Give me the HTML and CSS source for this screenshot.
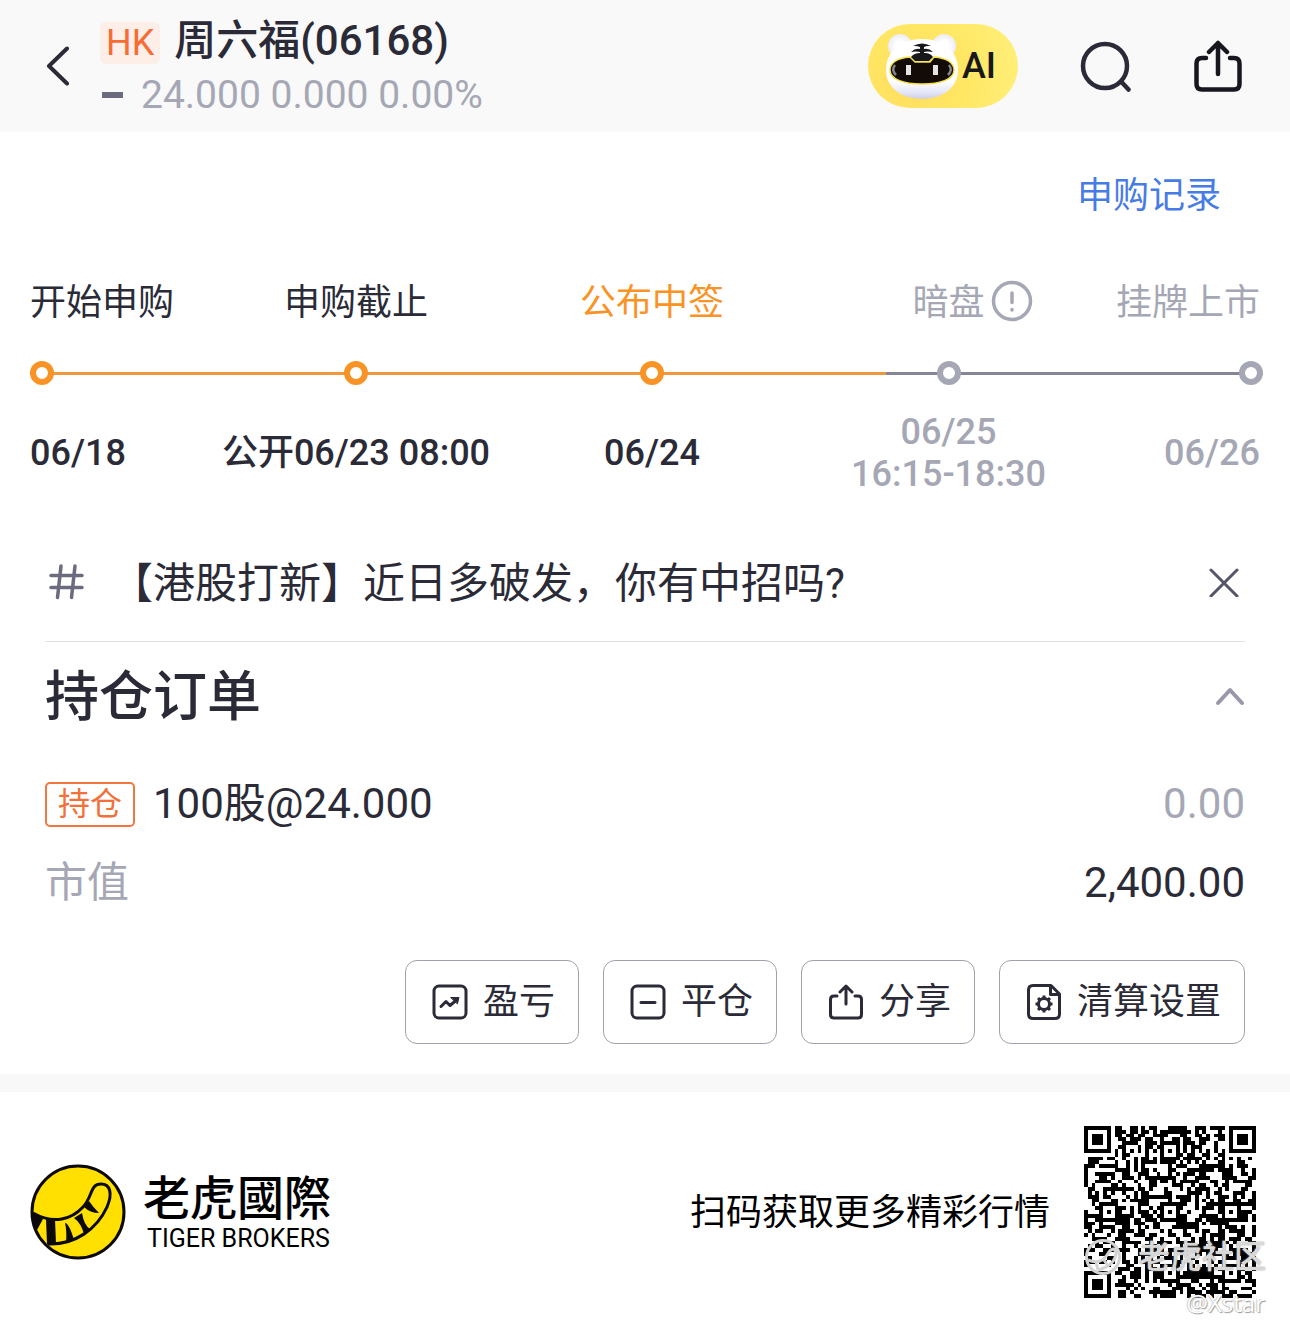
FILE: index.html
```html
<!DOCTYPE html>
<html lang="zh-CN">
<head>
<meta charset="utf-8">
<meta name="viewport" content="width=device-width, initial-scale=1">
<title>周六福(06168)</title>
<link rel="stylesheet" href="styles.css">
</head>
<body>
<header class="topbar">
  <button class="icon-button back" type="button" aria-label="返回">
    <svg width="24" height="40" viewBox="0 0 24 40" fill="none" stroke="#2b2b38" stroke-width="4" stroke-linecap="round" stroke-linejoin="round"><path d="M21 2.500L3 20l18 17.500"/></svg>
  </button>
  <div class="stock">
    <div class="stock-name"><span class="market">HK</span><h1>周六福(06168)</h1></div>
    <div class="stock-quote"><span class="flat"></span><span>24.000 0.000 0.00%</span></div>
  </div>
  <nav class="tools">
    <button class="ai" type="button">
      <svg width="76" height="72" viewBox="0 0 76 72">
        <defs>
          <linearGradient id="head" x1="0" y1="0" x2="0" y2="1"><stop offset="0.7" stop-color="#fff"/><stop offset="0.88" stop-color="#e6e8fa"/><stop offset="1" stop-color="#cfcfe2"/></linearGradient>
          <radialGradient id="ear"><stop offset="0.4" stop-color="#fff"/><stop offset="1" stop-color="#ececf4"/></radialGradient>
        </defs>
        <circle cx="16" cy="16" r="12" fill="url(#ear)"/><circle cx="60" cy="16" r="12" fill="url(#ear)"/>
        <path d="M38 9C58 9 74 20 74 40 74 58 58 69 38 69S2 58 2 40C2 20 18 9 38 9z" fill="url(#head)"/>
        <path d="M26 27C13 28 6 33 6 40c0 9 13 14 32 14s32-5 32-14c0-7-7-12-20-13l-4 5H31z" fill="#120b08" stroke="#f5df3c" stroke-width="1.500"/>
        <path d="M29 16q9-5 18 0q-5-.5-7 1v2q5-1 9 3q-6-1-9 0v1q6-.5 9 4l-4 4H31l-4-4q3-4 9-4v-1q-4-1-9 0q4-4 9-3v-2q-3-1.500-7-1z" fill="#17171c"/>
        <path d="M11 35q-4 5 1 10M65 35q4 5-1 10" fill="none" stroke="#85858c" stroke-width="2.500"/>
        <path d="M22 35h5v10h-5zM49 35h5v10h-5z" fill="#e4e4e4"/>
      </svg><span>AI</span>
    </button>
    <button class="icon-button" type="button" aria-label="搜索">
      <svg width="52" height="52" viewBox="0 0 52 52" fill="none" stroke="#2b2b38" stroke-width="4.500" stroke-linecap="round"><circle cx="25" cy="26" r="22"/><path d="M41.500 42l7 7.500"/></svg>
    </button>
    <button class="icon-button" type="button" aria-label="分享">
      <svg width="48" height="52" viewBox="0 0 48 52" fill="none" stroke="#17171f" stroke-width="4.500" stroke-linecap="round" stroke-linejoin="round"><path d="M12 18H8q-5.500 0-5.500 5.500V44Q2.500 49.500 8 49.500h32q5.500 0 5.500-5.500V23.500Q45.500 18 40 18h-4M24 34V3M15 12L24 3l9 9"/></svg>
    </button>
  </nav>
</header>

<main>
  <section class="ipo">
    <a class="records" href="#records">申购记录</a>
    <ol class="timeline">
      <li class="step"><span class="label">开始申购</span><span class="track"><i class="dot"></i></span><time class="date">06/18</time></li>
      <li class="step"><span class="label">申购截止</span><span class="track"><i class="dot"></i></span><time class="date">公开06/23 08:00</time></li>
      <li class="step current"><span class="label">公布中签</span><span class="track"><i class="dot"></i></span><time class="date">06/24</time></li>
      <li class="step next"><span class="label">暗盘<svg class="info" width="42" height="42" viewBox="0 0 42 42" fill="none" stroke="#a5a8b4" stroke-width="3.500" stroke-linecap="round"><circle cx="21" cy="21" r="18.500"/><path d="M21 13v9.500M21 29.500v.5"/></svg></span><span class="track"><i class="dot"></i></span><time class="date">06/25<br>16:15-18:30</time></li>
      <li class="step future"><span class="label">挂牌上市</span><span class="track"><i class="dot"></i></span><time class="date">06/26</time></li>
    </ol>
  </section>

  <section class="topic">
    <svg width="36" height="36" viewBox="0 0 36 36" fill="none" stroke="#6b6b80" stroke-width="3.500" stroke-linecap="round"><path d="M3 11.500h31M3 23.500h31M13 2L9.500 33.500M27 2L23.500 33.500"/></svg>
    <a class="topic-title" href="#topic">【港股打新】近日多破发，你有中招吗?</a>
    <button class="icon-button" type="button" aria-label="关闭">
      <svg width="30" height="30" viewBox="0 0 30 30" fill="none" stroke="#55556a" stroke-width="3" stroke-linecap="round"><path d="M2 3l26 26M28 3L2 29"/></svg>
    </button>
  </section>

  <section class="holdings">
    <div class="row heading">
      <h2>持仓订单</h2>
      <button class="icon-button" type="button" aria-label="收起">
        <svg width="30" height="20" viewBox="0 0 30 20" fill="none" stroke="#9898aa" stroke-width="4" stroke-linecap="round" stroke-linejoin="round"><path d="M3 17L15 4l12 13"/></svg>
      </button>
    </div>
    <div class="row position"><span class="tag">持仓</span><span>100股@24.000</span><span class="value muted">0.00</span></div>
    <div class="row market-value"><span class="muted">市值</span><span class="value">2,400.00</span></div>
    <div class="actions">
      <button class="action" type="button"><svg width="36" height="36" viewBox="0 0 36 36" fill="none" stroke="#2b2b38" stroke-width="3" stroke-linejoin="round" stroke-linecap="round"><rect x="2" y="2" width="32" height="32" rx="5"/><path d="M9 22.500l5-5 4 4 6-5"/><path d="M19 13.500h8l-1.500 6z" fill="#2b2b38" stroke-width="1"/></svg>盈亏</button>
      <button class="action" type="button"><svg width="36" height="36" viewBox="0 0 36 36" fill="none" stroke="#2b2b38" stroke-width="3" stroke-linecap="round"><rect x="2" y="2" width="32" height="32" rx="5"/><path d="M11 18.500h14"/></svg>平仓</button>
      <button class="action" type="button"><svg width="36" height="36" viewBox="0 0 36 36" fill="none" stroke="#2b2b38" stroke-width="3" stroke-linejoin="round" stroke-linecap="round"><path d="M9 12H6q-3.500 0-3.500 3.500v15Q2.500 34 6 34h24q3.500 0 3.500-3.500v-15Q33.500 12 30 12h-3M18 20V3M12 8l6-6 6 6"/></svg>分享</button>
      <button class="action" type="button"><svg width="36" height="36" viewBox="0 0 36 36" fill="none" stroke="#2b2b38" stroke-width="3" stroke-linejoin="round"><path d="M25 1.500H7Q2.500 1.500 2.500 6v24q0 4.500 4.500 4.500h22q4.500 0 4.500-4.500V10z"/><path d="M24.500 2v8.500H33"/><circle cx="18" cy="20" r="5.500"/><path d="M18 11.500v3M18 25.500v3M9.500 20h3M23.500 20h3M12 14l2 2M22 24l2 2M24 14l-2 2M14 24l-2 2"/></svg>清算设置</button>
    </div>
  </section>
</main>

<footer class="promo">
  <svg class="logo" width="96" height="96" viewBox="0 0 96 96">
    <circle cx="48" cy="48" r="46" fill="#ffe000" stroke="#0b0909" stroke-width="3"/>
    <path d="M3 49C24 61 42 55 53 43 63 32 60 20 71 20 80 20 83 29 77 43 67 65 45 81 18 80" fill="none" stroke="#0b0909" stroke-width="3"/>
    <path d="M2 48l11 7-6 11-4-6zM16 55h9l1 25h-9zM35 59q4 0 9 17l-8 3q1-12-1-20zM44 54l8-5q2 12 8 16l-6 5q-3-11-10-16zM54 43l5-6q4 6 10 12-9 0-15-6z" fill="#0b0909"/>
  </svg>
  <div class="brand"><strong lang="zh-Hant">老虎國際</strong><span>TIGER BROKERS</span></div>
  <p class="scan">扫码获取更多精彩行情</p>
  <div class="qr">
    <svg width="172" height="172" viewBox="0 0 45 45" shape-rendering="crispEdges" role="img" aria-label="二维码"><path id="qr-modules" fill="#000"/></svg>
    <div class="watermark">
      <svg width="38" height="38" viewBox="0 0 38 38" fill="none" stroke="#d3d3d3" stroke-width="3"><circle cx="19" cy="19" r="16.500"/><path d="M4 22q13 5 19-5t9-3q0 13-18 18M12 24l2 8M20 22l4 6"/></svg>
      <span>老虎社区</span>
    </div>
    <span class="author">@Xstar</span>
  </div>
</footer>
<script src="qr.js"></script>
</body>
</html>
```
FILE: styles.css
```css
* { box-sizing: border-box; }

body {
  margin: 0;
  background: #fff;
  color: #2b2b38;
  font-family: Roboto, "Noto Sans CJK SC", sans-serif;
  font-size: 42px;
  line-height: 54px;
}

h1, h2, p, ol { margin: 0; padding: 0; font-weight: 500; }
button { font: inherit; color: inherit; padding: 0; cursor: pointer; }
a { color: inherit; text-decoration: none; }
svg { display: block; flex: none; }

.icon-button { border: 0; background: none; flex: none; }

/* Top bar */
.topbar {
  display: flex;
  align-items: center;
  height: 132px;
  padding: 4px 48px 0 46px;
  background: #f9f9f9;
}
.back { margin-bottom: 4px; }
.stock { margin-left: 30px; }
.stock-name { display: flex; align-items: center; gap: 14px; }
.stock-name h1 { font-size: 42px; line-height: 54px; }
.market {
  margin-top: 4px;
  padding: 0 6px;
  border-radius: 6px;
  background: #fdeee8;
  color: #f76b35;
  font-size: 36px;
  line-height: 42px;
}
.stock-quote {
  display: flex;
  align-items: center;
  gap: 18px;
  color: #a5a8b4;
  font-size: 39px;
}
.flat { width: 21px; height: 6px; margin-left: 2px; background: #6b6b80; }
.tools {
  display: flex;
  align-items: center;
  gap: 62px;
  margin: 0 0 4px auto;
}
.ai {
  display: flex;
  align-items: center;
  gap: 2px;
  width: 150px;
  height: 84px;
  padding-left: 16px;
  border: 0;
  border-radius: 42px;
  background: radial-gradient(circle at 30% 65%, #ffdc5e, #ffe763 45%, #fff07c);
  color: #17171c;
  font-size: 36px;
  font-weight: 500;
}

/* Subscription timeline */
.ipo { padding: 36px 27px 0 30px; }
.records {
  display: block;
  width: fit-content;
  margin: 0 42px 0 auto;
  padding-top: 1px;
  color: #477be6;
  font-size: 36px;
}
.timeline {
  display: grid;
  grid-template-columns: 178fr 296fr 296fr 297fr 166fr;
  margin-top: 53px;
  list-style: none;
  font-size: 36px;
}
.step {
  display: flex;
  flex-direction: column;
  align-items: center;
  --accent: #f99326;
}
.label { position: relative; font-weight: 400; }
.info { position: absolute; left: 100%; top: 4px; margin-left: 6px; }
.track {
  display: flex;
  justify-content: center;
  align-self: stretch;
  height: 24px;
  margin: 31px 0 26px;
  background: linear-gradient(#ee9840, #ee9840) center / 100% 3px no-repeat;
}
.dot {
  width: 24px;
  height: 24px;
  border: 6px solid var(--accent);
  border-radius: 50%;
  background: #fff;
}
.date {
  display: flex;
  flex-direction: column;
  justify-content: center;
  min-height: 84px;
  line-height: 42px;
  font-weight: 500;
  text-align: center;
  white-space: nowrap;
}
.step:first-child { align-items: flex-start; }
.step:first-child .track { justify-content: flex-start; }
.step:last-child { align-items: flex-end; }
.step:last-child .track { justify-content: flex-end; }
.step:last-child .label, .step:last-child .date { margin-right: 3px; }
.current .label { color: #f99326; }
.next, .future { color: #a5a8b4; --accent: #a5a8b4; }
.next .date { display: block; }
.next .track { background-image: linear-gradient(to right, #ee9840 29%, #858598 29%); }
.future .track { background-image: linear-gradient(#858598, #858598); }

/* Topic banner */
.topic {
  display: flex;
  align-items: center;
  height: 119px;
  margin: 28px 45px 0;
  padding: 0 6px 0 3px;
  border-bottom: 1px solid #e2e2e6;
}
.topic-title { flex: 1; margin-left: 27px; padding-top: 4px; }

/* Holdings */
.holdings { padding: 0 45px 30px; border-bottom: 18px solid #f8f8f8; }
.row { display: flex; align-items: center; }
.heading { height: 108px; justify-content: space-between; }
.heading h2 { padding-top: 4px; font-size: 54px; }
.position { height: 84px; margin-top: 12px; }
.market-value { height: 74px; }
.tag {
  margin-right: 18px;
  padding: 0 11px;
  border: 2px solid #f2763f;
  border-radius: 5px;
  color: #f2703a;
  font-size: 32px;
  line-height: 41px;
}
.value { margin-left: auto; }
.muted { color: #a5a8b4; }
.actions { display: flex; justify-content: flex-end; gap: 24px; margin-top: 40px; }
.action {
  display: flex;
  align-items: center;
  gap: 15px;
  height: 84px;
  padding: 0 23px 0 26px;
  border: 1px solid #a0a1aa;
  border-radius: 12px;
  background: #fff;
  font-size: 36px;
}

/* Promo footer */
.promo {
  display: flex;
  align-items: center;
  padding: 34px 34px 34px 30px;
  color: #000;
}
.brand { display: flex; flex-direction: column; margin-left: 17px; padding-top: 2px; }
.brand strong {
  font-family: Roboto, "Noto Sans CJK TC", sans-serif;
  font-size: 47px;
  font-weight: 500;
  line-height: 52px;
}
.brand span { margin-left: 4px; font-size: 25px; line-height: 28px; }
.scan { margin-left: auto; padding-top: 2px; font-size: 36px; font-weight: 400; }
.qr { position: relative; margin-left: 34px; }
.watermark {
  position: absolute;
  top: 111px;
  left: 0;
  display: flex;
  align-items: center;
  gap: 16px;
  color: #d8d8d8;
  font-size: 32px;
  font-weight: 500;
  line-height: 40px;
  white-space: nowrap;
}
.watermark span { text-shadow: 0 0 2px #999; }
.author {
  position: absolute;
  top: 162px;
  right: -9px;
  color: #fff;
  font-family: "Open Sans", sans-serif;
  font-size: 24px;
  line-height: 30px;
  text-shadow: 1px 1px 1px #999, -1px 0 1px #ccc;
}
```
FILE: qr.js
```js
// Builds the 45x45 module grid of the code as a single SVG path.
const SIZE = 45;
const finders = [[0, 0], [SIZE - 7, 0], [0, SIZE - 7]];
const alignments = [[22, 6], [6, 22], [22, 22], [38, 22], [22, 38], [38, 38]];

let state = 616824;
function noise() {
  state = (state + 0x6d2b79f5) | 0;
  let t = Math.imul(state ^ (state >>> 15), 1 | state);
  t = (t + Math.imul(t ^ (t >>> 7), 61 | t)) ^ t;
  return ((t ^ (t >>> 14)) >>> 0) / 4294967296;
}

function isDark(x, y) {
  const random = noise() < 0.53;
  for (const [fx, fy] of finders) {
    const d = Math.max(Math.abs(x - fx - 3), Math.abs(y - fy - 3));
    if (d <= 4) return d === 3 || d <= 1;
  }
  for (const [ax, ay] of alignments) {
    const d = Math.max(Math.abs(x - ax), Math.abs(y - ay));
    if (d <= 2) return d !== 1;
  }
  if (x === 6 || y === 6) return (x + y) % 2 === 0;
  return random;
}

let path = "";
for (let y = 0; y < SIZE; y++) {
  for (let x = 0; x < SIZE; x++) {
    if (isDark(x, y)) path += `M${x} ${y}h1v1h-1z`;
  }
}
document.getElementById("qr-modules").setAttribute("d", path);
```
